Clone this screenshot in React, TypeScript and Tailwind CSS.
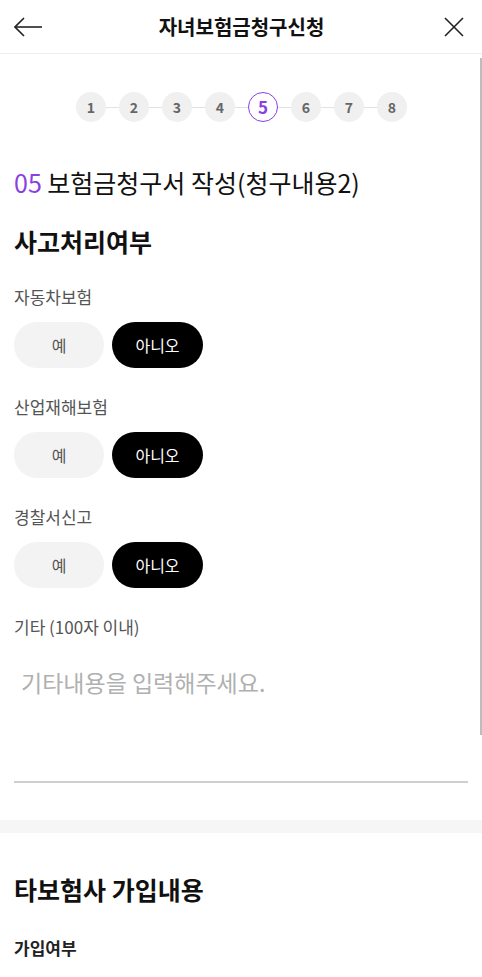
const font = { fontFamily: '"Noto Sans CJK KR", "Noto Sans", sans-serif' };

function YesNo() {
  return (
    <div className="flex gap-2 mt-[13px]">
      <button className="w-[90px] h-[46px] rounded-full bg-[#f3f3f3] text-[#555] text-[16px]">예</button>
      <button className="w-[91px] h-[46px] rounded-full bg-black text-white text-[16px]">아니오</button>
    </div>
  );
}

function Field({ label, top }: { label: string; top: string }) {
  return (
    <div className={top}>
      <p className="text-[17px] text-[#555] leading-[24px]">{label}</p>
      <YesNo />
    </div>
  );
}

function Stepper() {
  const steps = [1, 2, 3, 4, 5, 6, 7, 8];
  return (
    <div className="flex justify-center items-center pt-[38px] pl-[1px]">
      {steps.map((n, i) => (
        <div key={n} className="flex items-center">
          {i > 0 && <div className="w-[13px] h-[1px] bg-[#e2e2e2]" />}
          {n === 5 ? (
            <div className="w-[30px] h-[30px] rounded-full border-[1.5px] border-[#8a3fe0] bg-white text-[#8a3fe0] text-[17px] font-bold flex items-center justify-center">
              {n}
            </div>
          ) : (
            <div className="w-[30px] h-[30px] rounded-full bg-[#f0f0f0] text-[#666] text-[14px] font-bold flex items-center justify-center">
              {n}
            </div>
          )}
        </div>
      ))}
    </div>
  );
}

export default function App() {
  return (
    <div className="w-[482px] h-[977px] bg-white relative overflow-hidden" style={font}>
      <header className="h-[54px] flex items-center justify-between px-[14px] border-b border-[#ededed]">
        <svg width="28" height="28" viewBox="0 0 28 28" fill="none" stroke="#222" strokeWidth="1.6">
          <path d="M1 14 H28" />
          <path d="M10 5 L1 14 L10 23" />
        </svg>
        <h1 className="text-[20px] font-semibold text-[#111] -ml-[2px]">자녀보험금청구신청</h1>
        <svg width="22" height="22" viewBox="0 0 22 22" fill="none" stroke="#222" strokeWidth="1.6" className="mr-[3px]">
          <path d="M2 2 L20 20 M20 2 L2 20" />
        </svg>
      </header>

      <Stepper />

      <div className="px-[14px]">
        <h2 className="mt-[45px] text-[25px] text-[#111] leading-[30px]">
          <span className="text-[#8a3fe0]">05</span> 보험금청구서 작성(청구내용2)
        </h2>

        <h3 className="mt-[29px] text-[25px] font-bold text-[#111] leading-[30px]">사고처리여부</h3>

        <Field label="자동차보험" top="mt-[29px]" />
        <Field label="산업재해보험" top="mt-[27px]" />
        <Field label="경찰서신고" top="mt-[27px]" />

        <div className="mt-[27px]">
          <p className="text-[17px] text-[#555] leading-[24px]">기타 (100자 이내)</p>
          <textarea
            className="block w-full h-[115px] mt-[29px] px-[7px] text-[23px] leading-[28px] resize-none outline-none border-b-2 border-[#cfcfcf] placeholder:text-[#b0b0b0]"
            placeholder="기타내용을 입력해주세요."
          />
        </div>
      </div>

      <div className="h-[13px] bg-[#f6f6f6] mt-[37px]" />

      <div className="px-[14px]">
        <h3 className="mt-[41px] text-[25px] font-bold text-[#111] leading-[30px]">타보험사 가입내용</h3>
        <p className="mt-[32px] text-[17px] font-bold text-[#222] leading-[24px]">가입여부</p>
      </div>

      <div className="absolute right-0 top-[58px] w-[2px] h-[677px] bg-[#bdbdbd]" />
    </div>
  );
}
